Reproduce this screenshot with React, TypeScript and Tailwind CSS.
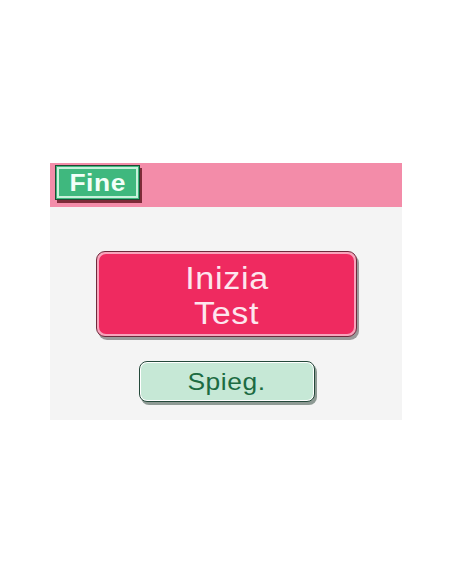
export default function App() {
  return (
    <div className="w-[452px] h-[584px] bg-white pt-[163px] pl-[50px]" style={{ fontFamily: '"Liberation Sans", Arial, sans-serif' }}>
      <div className="w-[352px]">
        <div className="h-[44px] bg-[#f38ca9] pl-[5px] pt-[2px]">
          <div className="w-[85px] h-[35px] border border-[#1f4a34] bg-[#3fb87e] p-[1px] shadow-[2px_3px_0_#7c2b38]">
            <div className="w-full h-full border-2 border-[#c8f1dc] flex items-center justify-center">
              <span className="inline-block scale-x-110 text-[24px] font-bold text-[#f2fff8] leading-none tracking-[0.5px] pt-[1px]">Fine</span>
            </div>
          </div>
        </div>
        <div className="h-[213px] bg-[#f4f4f4] flex flex-col items-center pt-[44px]">
          <div className="ml-[1px] w-[261px] h-[86px] rounded-[9px] border border-[#6e2a3c] bg-[#f8a3bb] p-[2px] shadow-[2px_3px_0_#9a9a9a]">
            <div className="w-full h-full rounded-[7px] bg-[#ef2a60] flex flex-col items-center justify-center pt-[4px]">
              <span className="inline-block scale-x-110 text-[31px] leading-[35px] tracking-[0.6px] text-[#fde6ee]">Inizia</span>
              <span className="inline-block scale-x-110 text-[31px] leading-[35px] tracking-[0.6px] text-[#fde6ee]">Test</span>
            </div>
          </div>
          <div className="mt-[24px] ml-[1px] w-[176px] h-[41px] rounded-[8px] border border-[#24483a] bg-white p-[1px] shadow-[2px_3px_0_#8e9a94]">
            <div className="w-full h-full rounded-[6px] bg-[#c6e8d6] flex items-center justify-center">
              <span className="inline-block scale-x-110 text-[24px] tracking-[0.5px] text-[#1c6b42]">Spieg.</span>
            </div>
          </div>
        </div>
      </div>
    </div>
  );
}
